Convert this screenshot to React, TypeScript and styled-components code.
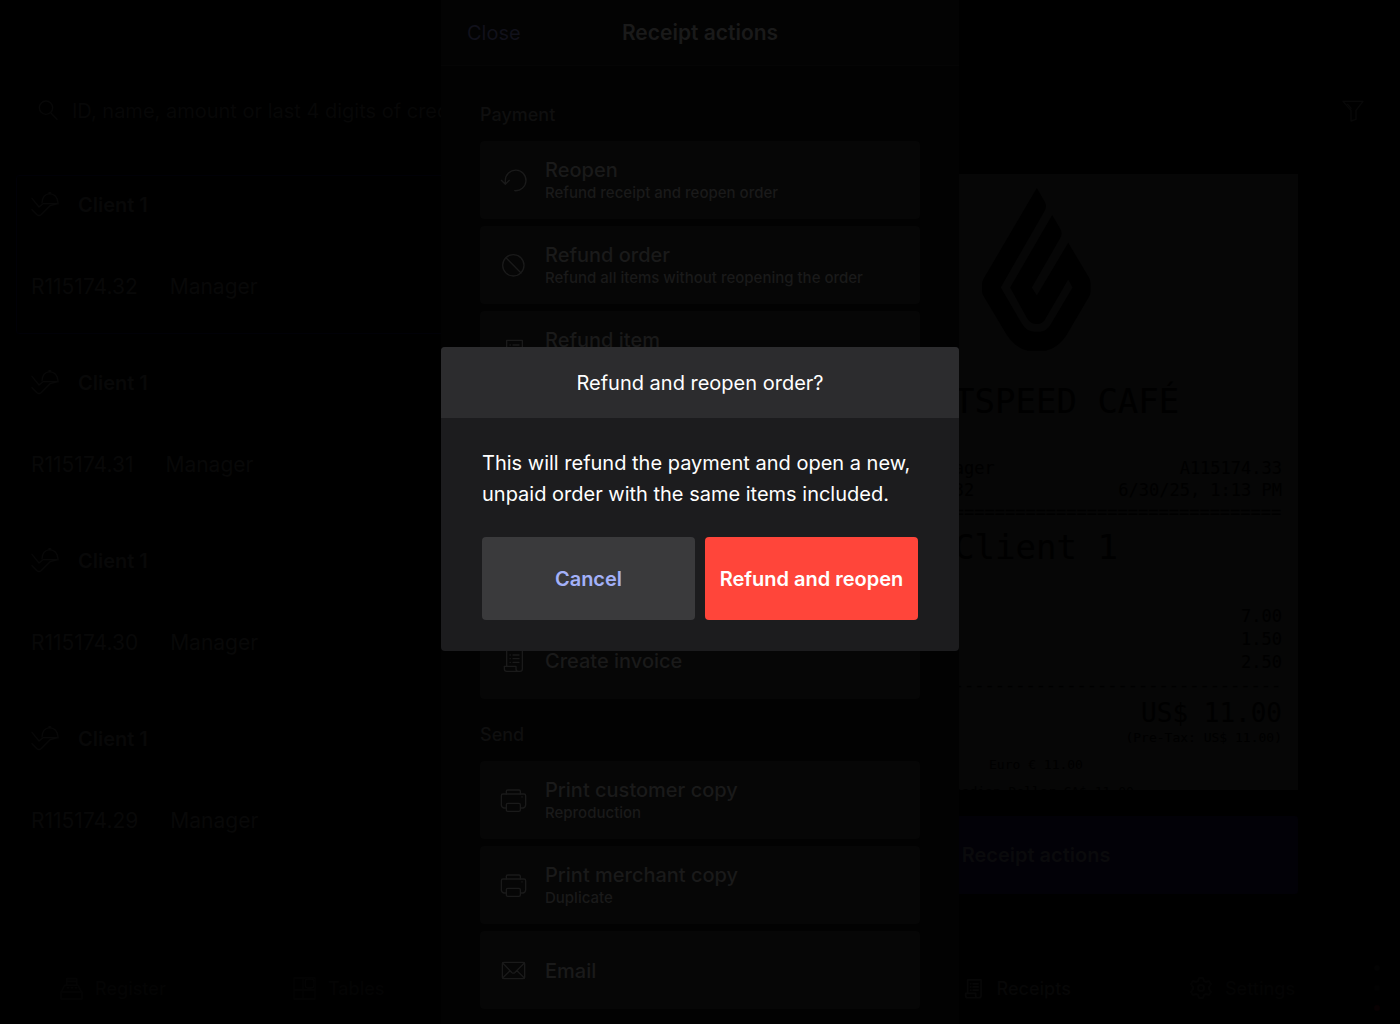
import React from 'react';
import styled, { createGlobalStyle } from 'styled-components';

const GlobalStyle = createGlobalStyle`
  * { box-sizing: border-box; }
  body {
    margin: 0;
    background: #000;
    color: #080808;
    font-family: Inter, "Liberation Sans", sans-serif;
    font-size: 20px;
    overflow: hidden;
  }
  h1, h2, p { margin: 0; font-weight: inherit; font-size: inherit; }
  button, input { font: inherit; color: inherit; border: 0; background: none; padding: 0; margin: 0; }
  button { cursor: pointer; }
`;

/* ---------- page behind the dialogs ---------- */

const Page = styled.div`
  height: 100vh;
  display: flex;
  flex-direction: column;
`;

const SearchBar = styled.label`
  display: flex;
  align-items: center;
  gap: 12px;
  margin-top: 72px;
  height: 77px;
  padding: 0 36px 0 38px;
  flex: none;
`;

const SearchInput = styled.input`
  flex: 1;
  min-width: 0;
  height: 32px;
  outline: none;
  &::placeholder { color: #070707; opacity: 1; }
`;

const Content = styled.main`
  flex: 1;
  min-height: 0;
  display: grid;
  grid-template-columns: 48fr 52fr;
`;

const ReceiptList = styled.ul`
  list-style: none;
  margin: 0;
  padding: 26px 16px 0;
  display: flex;
  flex-direction: column;
  gap: 19px;
  min-height: 0;
  overflow: hidden;
`;

const ReceiptRow = styled.li<{ $selected?: boolean }>`
  height: 159px;
  flex: none;
  padding: 14px 14px 30px;
  border: 1px solid ${(p) => (p.$selected ? '#010107' : 'transparent')};
  border-radius: 3px;
  display: flex;
  flex-direction: column;
  justify-content: space-between;
`;

const ClientLine = styled.div`
  display: flex;
  align-items: center;
  gap: 18px;
  height: 30px;
  font-weight: 600;
`;

const MetaLine = styled.div`
  display: flex;
  gap: 32px;
  height: 32px;
  font-size: 21px;
  line-height: 32px;
`;

const Detail = styled.section`
  display: flex;
  flex-direction: column;
  gap: 26px;
  min-height: 0;
  padding: 25px 102px 58px;
`;

const Paper = styled.article`
  flex: 1;
  min-height: 0;
  overflow: hidden;
  background: #060606;
  color: #000;
  padding: 14px 16px;
  font-family: "DejaVu Sans Mono", monospace;
  font-size: 17px;
  line-height: 23px;
`;

const PaperLogo = styled.svg`
  display: block;
  margin: 0 auto 27px;
`;

const PaperTitle = styled.h2`
  font-size: 34px;
  line-height: 46px;
  text-align: center;
  white-space: pre;
`;

const PaperClient = styled(PaperTitle)`
  margin-bottom: 35px;
`;

const PaperStaff = styled.div`
  margin-top: 33px;
  line-height: 22px;
`;

const PaperRow = styled.div`
  display: flex;
  justify-content: space-between;
`;

const PaperRule = styled.div`
  white-space: nowrap;
  overflow: hidden;
`;

const PaperTotal = styled(PaperRow)`
  font-size: 26px;
  line-height: 32px;
`;

const PaperNote = styled.div<{ $align: 'right' | 'center' }>`
  font-size: 13px;
  line-height: 18px;
  margin-bottom: 9px;
  text-align: ${(p) => p.$align};
`;

const ReceiptButton = styled.button`
  height: 78px;
  flex: none;
  border-radius: 3px;
  background: #020107;
  color: #0a0a0c;
  font-weight: 600;
`;

const NavBar = styled.nav`
  height: 72px;
  flex: none;
  display: grid;
  grid-template-columns: repeat(6, 1fr) 45px;
  font-size: 18px;
  font-weight: 500;
`;

const NavItem = styled.a<{ $active?: boolean }>`
  display: flex;
  align-items: center;
  justify-content: center;
  gap: 12px;
  text-decoration: none;
  color: ${(p) => (p.$active ? '#070707' : '#040404')};
`;

const StatusDots = styled.div`
  display: flex;
  flex-direction: column;
  align-items: center;
  justify-content: center;
  gap: 14px;
`;

const Dot = styled.i<{ $color: string }>`
  width: 6px;
  height: 6px;
  border-radius: 50%;
  background: ${(p) => p.$color};
`;

/* ---------- receipt actions sheet ---------- */

const Layer = styled.div`
  position: fixed;
  inset: 0;
  display: flex;
  justify-content: center;
`;

const DialogLayer = styled(Layer)`
  align-items: center;
  padding-bottom: 26px;
`;

const Sheet = styled.section`
  width: 37%;
  min-width: 518px;
  height: 100%;
  overflow: hidden;
  background: #020202;
  color: #1a1a1a;
`;

const SheetHeader = styled.header`
  display: grid;
  grid-template-columns: 1fr auto 1fr;
  align-items: center;
  height: 66px;
  padding: 0 26px;
  background: #030303;
  border-bottom: 1px solid #050505;
`;

const SheetTitle = styled.h1`
  font-size: 21px;
  font-weight: 600;
`;

const CloseButton = styled.button`
  justify-self: start;
  color: #11111b;
`;

const SheetBody = styled.div`
  padding: 13px 39px;
`;

const SectionTitle = styled.h2`
  height: 62px;
  padding-top: 25px;
  font-size: 18px;
  line-height: 22px;
  font-weight: 500;
  color: #0f0f0f;
`;

const Actions = styled.div`
  display: flex;
  flex-direction: column;
  gap: 7px;
`;

const ActionButton = styled.button`
  display: flex;
  align-items: center;
  gap: 18px;
  height: 78px;
  padding: 0 20px;
  border-radius: 4px;
  background: #060606;
  text-align: left;
`;

const ActionText = styled.span`
  display: flex;
  flex-direction: column;
  padding-top: 2px;
`;

const ActionLabel = styled.span`
  line-height: 24px;
  font-weight: 500;
`;

const ActionHint = styled.span`
  font-size: 15px;
  line-height: 22px;
  font-weight: 500;
`;

/* ---------- confirmation dialog ---------- */

const Dialog = styled.section`
  width: 37%;
  min-width: 518px;
  border-radius: 4px;
  overflow: hidden;
  background: #1c1c1e;
  color: #fff;
`;

const DialogTitle = styled.h2`
  height: 71px;
  line-height: 73px;
  text-align: center;
  background: #2c2c2e;
`;

const DialogBody = styled.div`
  padding: 30px 41px 31px;
`;

const DialogText = styled.p`
  line-height: 31px;
  margin-bottom: 27px;
`;

const DialogActions = styled.div`
  display: grid;
  grid-template-columns: 1fr 1fr;
  gap: 10px;
`;

const DialogButton = styled.button<{ $danger?: boolean }>`
  height: 83px;
  border-radius: 4px;
  font-weight: 600;
  white-space: nowrap;
  background: ${(p) => (p.$danger ? '#ff453a' : '#3a3a3c')};
  color: ${(p) => (p.$danger ? '#fff' : '#a3b1f9')};
`;

/* ---------- icons ---------- */

type IconProps = { children: React.ReactNode; size?: number; box?: number; stroke?: number };

const Icon = ({ children, size = 27, box = 81, stroke = 4 }: IconProps) => (
  <svg
    width={size}
    height={size}
    viewBox={`0 0 ${box} ${box}`}
    fill="none"
    stroke="currentColor"
    strokeWidth={stroke}
    strokeLinecap="round"
    strokeLinejoin="round"
    aria-hidden="true"
  >
    {children}
  </svg>
);

const ReopenIcon = () => (
  <Icon>
    <path d="M44 71A31 31 0 1 0 16 40V51M4 40L16 52L28 40" />
  </Icon>
);
const BanIcon = () => (
  <Icon>
    <circle cx="40" cy="40" r="32" />
    <path d="M18 17L63 63" />
  </Icon>
);
const ReceiptIcon = ({ size = 27, stroke = 4 }: { size?: number; stroke?: number }) => (
  <Icon size={size} stroke={stroke}>
    <path d="M20 56V10H67V66Q67 73 60 73H20Q13 73 13 66V58H48V66Q48 73 55 73" />
    <path d="M30 24H31M39 24H57M30 35H31M39 35H57M30 46H31M39 46H57" />
  </Icon>
);
const PrinterIcon = () => (
  <Icon>
    <path d="M19 21V13Q19 9 23 9H57Q61 9 61 13V21" />
    <path d="M19 63H12Q4 61 4 53V26Q4 21 9 21H72Q77 21 77 26V53Q77 61 69 63H62" />
    <rect x="19" y="49" width="42" height="24" rx="4" />
    <path d="M66 29V30" />
  </Icon>
);
const MailIcon = () => (
  <Icon>
    <rect x="7" y="16" width="67" height="49" rx="4" />
    <path d="M8 18L36 47Q40 50 44 47L73 18M8 63L30 41M73 63L51 41" />
  </Icon>
);
const SearchIcon = () => (
  <Icon size={22} box={66}>
    <circle cx="24" cy="23" r="20" />
    <path d="M38 38L57 58" />
  </Icon>
);
const FilterIcon = () => (
  <Icon size={22} box={66}>
    <path d="M3 4H63L42 31V58L27 63V31Z" />
    <path d="M17 13L27 25" />
  </Icon>
);
const ServiceIcon = () => (
  <Icon size={29} box={87}>
    <path d="M3 22L24 48L36 38H82L57 44L30 71Q24 76 18 71L3 56" />
    <path d="M33 36Q34 10 56 8Q79 10 81 36M54 5H59" />
  </Icon>
);
const RegisterIcon = () => (
  <Icon size={23} box={69} stroke={5}>
    <path d="M3 45H66V66H3ZM4 44L14 25H54L64 44M20 24V5H50V24M20 13H50" />
    <path d="M22 32H26M34 32H38M46 32H50" />
  </Icon>
);
const TablesIcon = () => (
  <Icon size={23} box={69}>
    <path d="M3 3H66V66H3ZM30 3V66M3 39H66" />
    <rect x="37" y="6" width="26" height="27" rx="8" />
  </Icon>
);
const SettingsIcon = () => (
  <Icon size={24} box={24} stroke={2}>
    <circle cx="12" cy="12" r="3" />
    <path d="M10 2h4l1 3 2 1 3-1 2 3-2 3v2l2 3-2 3-3-1-2 1-1 3h-4l-1-3-2-1-3 1-2-3 2-3v-2L2 8l2-3 3 1 2-1z" />
  </Icon>
);
const PersonIcon = () => (
  <Icon size={23} box={69}>
    <circle cx="34" cy="20" r="14" />
    <path d="M6 64Q10 40 34 40Q58 40 62 64Z" />
  </Icon>
);

/* ---------- data ---------- */

const receipts = [
  { id: 'R115174.32', client: 'Client 1', staff: 'Manager' },
  { id: 'R115174.31', client: 'Client 1', staff: 'Manager' },
  { id: 'R115174.30', client: 'Client 1', staff: 'Manager' },
  { id: 'R115174.29', client: 'Client 1', staff: 'Manager' },
];

const navItems = [
  { label: 'Register', icon: <RegisterIcon /> },
  { label: 'Tables', icon: <TablesIcon /> },
  { label: 'Customers', icon: <PersonIcon /> },
  { label: 'Orders', icon: <ReceiptIcon size={23} /> },
  { label: 'Receipts', icon: <ReceiptIcon size={23} stroke={6} /> },
  { label: 'Settings', icon: <SettingsIcon /> },
];

type Action = { label: string; hint?: string; icon: React.ReactNode };

const sections: { title: string; actions: Action[] }[] = [
  {
    title: 'Payment',
    actions: [
      { label: 'Reopen', hint: 'Refund receipt and reopen order', icon: <ReopenIcon /> },
      { label: 'Refund order', hint: 'Refund all items without reopening the order', icon: <BanIcon /> },
      { label: 'Refund item', hint: 'Refund selected items', icon: <ReceiptIcon /> },
      { label: 'Edit payment', icon: <ReceiptIcon /> },
      { label: 'Adjust tip', icon: <ReceiptIcon /> },
    ],
  },
  { title: 'Invoice', actions: [{ label: 'Create invoice', icon: <ReceiptIcon /> }] },
  {
    title: 'Send',
    actions: [
      { label: 'Print customer copy', hint: 'Reproduction', icon: <PrinterIcon /> },
      { label: 'Print merchant copy', hint: 'Duplicate', icon: <PrinterIcon /> },
      { label: 'Email', icon: <MailIcon /> },
    ],
  },
];

const items = [
  ['Sandwich', '7.00'],
  ['Tea', '1.50'],
  ['Coffee', '2.50'],
];

export default function App() {
  return (
    <>
      <GlobalStyle />
      <Page>
        <SearchBar>
          <SearchIcon />
          <SearchInput
            type="search"
            aria-label="Search receipts"
            placeholder="ID, name, amount or last 4 digits of credit card"
          />
          <FilterIcon />
        </SearchBar>
        <Content>
          <ReceiptList>
            {receipts.map((r, i) => (
              <ReceiptRow key={r.id} $selected={i === 0}>
                <ClientLine>
                  <ServiceIcon />
                  {r.client}
                </ClientLine>
                <MetaLine>
                  <span>{r.id}</span>
                  <span>{r.staff}</span>
                </MetaLine>
              </ReceiptRow>
            ))}
          </ReceiptList>
          <Detail>
            <Paper>
              <PaperLogo width="109" height="163" viewBox="96 86 326 488" aria-hidden="true">
                <path d="M260 86L284 128Q291 141 284 153L152 384L215 492Q229 516 252 516H270Q290 516 303 492L367 384L354 360L287 475Q279 493 260 493Q241 493 232 478L180 384L306 167L330 208Q338 222 330 236L245 384L260 408L354 250L416 354Q421 362 421 372V394Q421 402 417 410L357 513Q330 564 287 573H233Q190 564 162 513L101 410Q96 402 96 394V375Q96 366 101 357Z" />
              </PaperLogo>
              <PaperTitle>{'LIGHTSPEED CAFÉ '}</PaperTitle>
              <PaperStaff>
                <PaperRow>
                  <span>Staff member Manager</span>
                  <span>A115174.33</span>
                </PaperRow>
                <PaperRow>
                  <span>Receipt R115174.32</span>
                  <span>6/30/25, 1:13 PM</span>
                </PaperRow>
              </PaperStaff>
              <PaperRule>{'='.repeat(48)}</PaperRule>
              <PaperClient>Client 1</PaperClient>
              {items.map(([name, price]) => (
                <PaperRow key={name}>
                  <span>{name}</span>
                  <span>{price}</span>
                </PaperRow>
              ))}
              <PaperRule>{'-'.repeat(48)}</PaperRule>
              <PaperTotal>
                <span>Total</span>
                <span>US$ 11.00</span>
              </PaperTotal>
              <PaperNote $align="right">(Pre-Tax: US$ 11.00)</PaperNote>
              <PaperNote $align="center">Euro € 11.00</PaperNote>
              <PaperNote $align="center">Canadian Dollar CA$ 11.00</PaperNote>
            </Paper>
            <ReceiptButton type="button">Receipt actions</ReceiptButton>
          </Detail>
        </Content>
        <NavBar>
          {navItems.map((n) => (
            <NavItem key={n.label} href="#" $active={n.label === 'Receipts'}>
              {n.icon}
              {n.label}
            </NavItem>
          ))}
          <StatusDots>
            <Dot $color="#030303" />
            <Dot $color="#020202" />
            <Dot $color="#080102" />
          </StatusDots>
        </NavBar>
      </Page>

      <Layer>
        <Sheet aria-label="Receipt actions">
          <SheetHeader>
            <CloseButton type="button">Close</CloseButton>
            <SheetTitle>Receipt actions</SheetTitle>
          </SheetHeader>
          <SheetBody>
            {sections.map((s) => (
              <section key={s.title}>
                <SectionTitle>{s.title}</SectionTitle>
                <Actions>
                  {s.actions.map((a) => (
                    <ActionButton key={a.label} type="button">
                      {a.icon}
                      <ActionText>
                        <ActionLabel>{a.label}</ActionLabel>
                        {a.hint && <ActionHint>{a.hint}</ActionHint>}
                      </ActionText>
                    </ActionButton>
                  ))}
                </Actions>
              </section>
            ))}
          </SheetBody>
        </Sheet>
      </Layer>

      <DialogLayer>
        <Dialog role="alertdialog" aria-modal="true" aria-labelledby="dialog-title" aria-describedby="dialog-text">
          <DialogTitle id="dialog-title">Refund and reopen order?</DialogTitle>
          <DialogBody>
            <DialogText id="dialog-text">
              This will refund the payment and open a new, unpaid order with the same items included.
            </DialogText>
            <DialogActions>
              <DialogButton type="button">Cancel</DialogButton>
              <DialogButton type="button" $danger>
                Refund and reopen
              </DialogButton>
            </DialogActions>
          </DialogBody>
        </Dialog>
      </DialogLayer>
    </>
  );
}
